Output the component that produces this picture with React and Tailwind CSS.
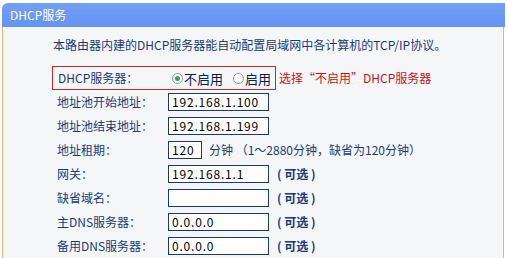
const FONT = { fontFamily: '"SimSun", "Noto Sans CJK SC", sans-serif' };

const rows = [
  { label: "地址池开始地址：", value: "192.168.1.100" },
  { label: "地址池结束地址：", value: "192.168.1.199" },
  { label: "地址租期：", value: "120", lease: true },
  { label: "网关：", value: "192.168.1.1", optional: true },
  { label: "缺省域名：", value: "", optional: true },
  { label: "主DNS服务器：", value: "0.0.0.0", optional: true },
  { label: "备用DNS服务器：", value: "0.0.0.0", optional: true },
];

function Radio({ checked }) {
  return (
    <span className="inline-flex h-[11px] w-[11px] items-center justify-center rounded-full border border-[#8a9ab0] bg-white">
      {checked && <span className="h-[5px] w-[5px] rounded-full bg-[#2fa84f]" />}
    </span>
  );
}

function Field({ value, width }) {
  return (
    <div
      className={`flex h-[18px] items-center border border-[#1f3a6a] bg-white pl-[3px] text-[12px] tracking-[0.8px] text-black ${width}`}
    >
      {value}
    </div>
  );
}

export default function App() {
  return (
    <div className="h-[258px] w-[507px] bg-white pt-[3px] pl-[2px] text-[12px] leading-none text-[#183c78]" style={FONT}>
      {/* Header bar */}
      <div className="flex h-[24px] w-[503px] items-center rounded-tl-[6px] bg-gradient-to-b from-[#739ff5] to-[#6294f3] pl-[8px] text-[12px] text-white">
        DHCP服务
      </div>

      {/* Body */}
      <div className="h-[231px] w-[502px] border-l border-r border-[#e0b47a] bg-[#f5f6f8]">
        <div className="flex h-[39px] items-center pb-[3px] pl-[50px]">
          本路由器内建的DHCP服务器能自动配置局域网中各计算机的TCP/IP协议。
        </div>

        <div className="flex items-center">
          <div className="ml-[49px] flex h-[24px] w-[224px] items-center border border-[#c8282c] pl-[5px]">
            <span className="w-[114px]">DHCP服务器：</span>
            <span className="flex items-center gap-[1px]">
              <Radio checked />
              <span className="text-[13px] text-[#10204a]">不启用</span>
            </span>
            <span className="ml-[10px] flex items-center gap-[1px]">
              <Radio />
              <span className="text-[13px] text-[#10204a]">启用</span>
            </span>
          </div>
          <span className="ml-[3px] text-[#c8141a]">选择“不启用”DHCP服务器</span>
        </div>

        {rows.map((r) => (
          <div key={r.label} className="flex h-[24px] items-center pl-[54px]">
            <span className="w-[111px]">{r.label}</span>
            {r.lease ? (
              <>
                <Field value={r.value} width="w-[34px]" />
                <span className="ml-[7px]">分钟 （1～2880分钟，缺省为120分钟）</span>
              </>
            ) : (
              <>
                <Field value={r.value} width="w-[101px]" />
                {r.optional && <span className="ml-[8px] font-bold">( 可选 )</span>}
              </>
            )}
          </div>
        ))}
      </div>
    </div>
  );
}
